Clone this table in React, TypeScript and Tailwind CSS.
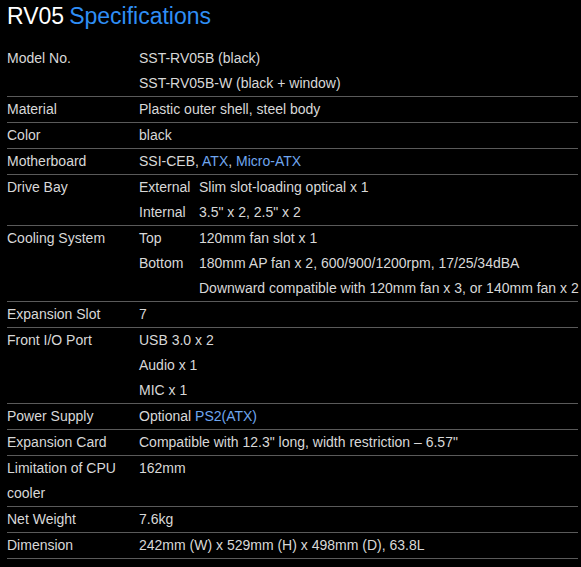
const link = "text-[#6fa6ee]";

type Row = { label: string; lines?: React.ReactNode[]; sub?: [string, React.ReactNode[]][] };

const rows: Row[] = [
  { label: "Model No.", lines: ["SST-RV05B (black)", "SST-RV05B-W (black + window)"] },
  { label: "Material", lines: ["Plastic outer shell, steel body"] },
  { label: "Color", lines: ["black"] },
  {
    label: "Motherboard",
    lines: [
      <>
        SSI-CEB, <span className={link}>ATX</span>, <span className={link}>Micro-ATX</span>
      </>,
    ],
  },
  {
    label: "Drive Bay",
    sub: [
      ["External", ["Slim slot-loading optical x 1"]],
      ["Internal", ["3.5\" x 2, 2.5\" x 2"]],
    ],
  },
  {
    label: "Cooling System",
    sub: [
      ["Top", ["120mm fan slot x 1"]],
      [
        "Bottom",
        [
          "180mm AP fan x 2, 600/900/1200rpm, 17/25/34dBA",
          "Downward compatible with 120mm fan x 3, or 140mm fan x 2",
        ],
      ],
    ],
  },
  { label: "Expansion Slot", lines: ["7"] },
  { label: "Front I/O Port", lines: ["USB 3.0 x 2", "Audio x 1", "MIC x 1"] },
  {
    label: "Power Supply",
    lines: [
      <>
        Optional <span className={link}>PS2(ATX)</span>
      </>,
    ],
  },
  { label: "Expansion Card", lines: ["Compatible with 12.3\" long, width restriction \u2013 6.57\""] },
  { label: "Limitation of CPU cooler", lines: ["162mm"] },
  { label: "Net Weight", lines: ["7.6kg"] },
  { label: "Dimension", lines: ["242mm (W) x 529mm (H) x 498mm (D), 63.8L"] },
];

export default function App() {
  return (
    <div className="min-h-screen bg-black pl-[7px] pr-[3px] font-['Liberation_Sans',Arial,sans-serif] text-[#d8d8d8]">
      <h1 className="flex gap-[5px] pt-[1px] text-[23px] leading-[30px]">
        <span className="text-white">RV05</span>
        <span className="text-[#2f8ef5]">Specifications</span>
      </h1>
      <div className="mt-[15px] text-[14px] leading-[25px]">
        {rows.map((r) => (
          <div key={r.label} className="grid grid-cols-[132px_1fr] border-b border-[#5a5a5a]">
            <div className="w-[124px]">{r.label}</div>
            <div>
              {r.lines?.map((l, i) => <div key={i}>{l}</div>)}
              {r.sub?.map(([k, vs]) => (
                <div key={k} className="grid grid-cols-[60px_1fr]">
                  <div>{k}</div>
                  <div>
                    {vs.map((v, i) => (
                      <div key={i} className="whitespace-nowrap">{v}</div>
                    ))}
                  </div>
                </div>
              ))}
            </div>
          </div>
        ))}
      </div>
    </div>
  );
}
